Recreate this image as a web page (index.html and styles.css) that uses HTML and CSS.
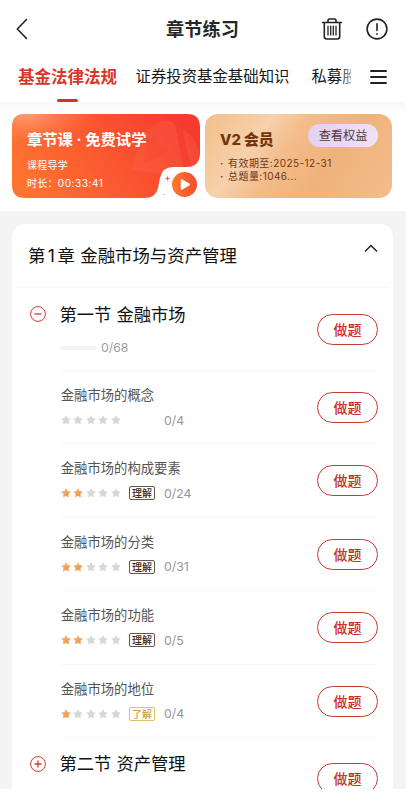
FILE: index.html
```html
<!DOCTYPE html>
<html lang="zh-CN">
<head>
<meta charset="utf-8">
<title>章节练习</title>
<link rel="stylesheet" href="styles.css">
</head>
<body>
<svg width="0" height="0" class="defs" aria-hidden="true">
  <defs>
    <linearGradient id="gold" x1="0" y1="0" x2="1" y2="1"><stop offset="0" stop-color="#f8bd7c"/><stop offset="1" stop-color="#e8883a"/></linearGradient>
    <symbol id="star" viewBox="0 0 10 10"><path d="M5 .6 6.4 3.3 9.4 3.8 7.3 6 7.7 9.1 5 7.8 2.3 9.1 2.7 6 .6 3.8 3.6 3.3Z" stroke-linejoin="round" stroke-width=".4"/></symbol>
  </defs>
</svg>
<div class="app">
  <header class="header">
    <svg class="back" width="14" height="22" viewBox="0 0 14 22"><path d="M11.500 1.500 2.300 11 11.500 20.500"/></svg>
    <h1>章节练习</h1>
    <div class="actions">
      <svg width="22" height="24" viewBox="0 0 22 24"><path d="M1.600 5.500H20.400M7 5.300V3.500Q7 2 8.500 2H13.500Q15 2 15 3.500V5.300M3.300 6V19.500Q3.300 22 5.800 22H16.200Q18.700 22 18.700 19.500V6"/><path stroke-width="1.300" d="M7 9.200V18M9.700 9.200V18M12.300 9.200V18M15 9.200V18"/></svg>
      <svg width="22" height="24" viewBox="0 0 22 24"><circle cx="11" cy="12" r="9.900"/><path d="M11 6.800V13.500M11 16.700V17.200"/></svg>
    </div>
  </header>
  <nav class="tabs">
    <span class="tab active">基金法律法规</span>
    <span class="tab second">证券投资基金基础知识</span>
    <span class="tab third">私募股权</span>
    <div class="more"><i></i><i></i><i></i></div>
  </nav>
  <section class="promos">
    <article class="promo course">
      <svg class="art" width="188" height="84" viewBox="0 0 188 84">
        <defs>
          <linearGradient id="red" x1="0" y1=".65" x2="1" y2=".35"><stop offset="0" stop-color="#ff7430"/><stop offset=".5" stop-color="#fb5730"/><stop offset="1" stop-color="#f43b2d"/></linearGradient>
          <radialGradient id="shine" cx=".08" cy="0" r=".38"><stop offset="0" stop-color="#ffb18a" stop-opacity=".75"/><stop offset="1" stop-color="#ff8050" stop-opacity="0"/></radialGradient>
          <linearGradient id="play" x1="0" x2="1"><stop offset="0" stop-color="#ff7933"/><stop offset="1" stop-color="#f54a2b"/></linearGradient>
        </defs>
        <path fill="url(#red)" d="M13 0H175Q188 0 188 13V39Q188 53 174 53H161Q150 53 148 64L146 74Q144 84 132 84H13Q0 84 0 71V13Q0 0 13 0Z"/>
        <path fill="url(#shine)" d="M13 0H175Q188 0 188 13V39Q188 53 174 53H161Q150 53 148 64L146 74Q144 84 132 84H13Q0 84 0 71V13Q0 0 13 0Z"/>
        <path fill="#ff7660" opacity=".2" d="M120 56Q128 14 150 7Q162 5 164 14L171 53H161Q150 53 148 60ZM171 16Q184 22 187 39Q187 50 180 52Q173 35 171 16Z"/>
        <path fill="#f44a2d" opacity=".4" d="M135 25Q133 23 138 24L155 34Q158 36 155 38L136 48Q132 50 132 46Z"/>
        <circle cx="172.500" cy="70.500" r="12.500" fill="url(#play)"/>
        <path fill="#fff" stroke="#fff" stroke-width="1.500" stroke-linejoin="round" d="M169.500 66V75L177.300 70.500Z"/>
        <path stroke="#e85c62" stroke-width="1.200" d="M153.500 64.500H157.500M155.500 62.500V66.500"/><path stroke="#ffb7a0" d="M151 80.500H153"/>
      </svg>
      <div class="copy">
        <h2>章节课 · 免费试学</h2>
        <p>课程导学</p>
        <p>时长：<span class="time">00:33:41</span></p>
      </div>
    </article>
    <article class="promo member">
      <div class="member-top"><h2>V2 会员</h2><span class="benefits">查看权益</span></div>
      <p><b>·</b>有效期至:2025-12-31</p>
      <p><b>·</b>总题量:1046...</p>
    </article>
  </section>
  <main class="content">
    <section class="chapter">
      <div class="chapter-head"><h2>第<span class="num">1</span>章 金融市场与资产管理</h2><svg width="14" height="9" viewBox="0 0 14 9"><path d="M1 7.500 7 1.500 13 7.500"/></svg></div>
      <div class="section-row">
        <svg class="toggle" width="16" height="16" viewBox="0 0 16 16"><circle cx="8" cy="8" r="7.400"/><path d="M4.500 8H11.500"/></svg>
        <div><h3>第一节 金融市场</h3><div class="progress"><i></i><span>0/68</span></div></div>
        <span class="practice">做题</span>
      </div>
      <div class="lesson"><div><h4>金融市场的概念</h4><div class="meta"><div class="stars"><svg><use href="#star"/></svg><svg><use href="#star"/></svg><svg><use href="#star"/></svg><svg><use href="#star"/></svg><svg><use href="#star"/></svg></div><span class="slot"></span><span>0/4</span></div></div><span class="practice">做题</span></div>
      <div class="lesson"><div><h4>金融市场的构成要素</h4><div class="meta"><div class="stars"><svg class="on"><use href="#star"/></svg><svg class="on"><use href="#star"/></svg><svg><use href="#star"/></svg><svg><use href="#star"/></svg><svg><use href="#star"/></svg></div><span class="slot tag">理解</span><span>0/24</span></div></div><span class="practice">做题</span></div>
      <div class="lesson"><div><h4>金融市场的分类</h4><div class="meta"><div class="stars"><svg class="on"><use href="#star"/></svg><svg class="on"><use href="#star"/></svg><svg><use href="#star"/></svg><svg><use href="#star"/></svg><svg><use href="#star"/></svg></div><span class="slot tag">理解</span><span>0/31</span></div></div><span class="practice">做题</span></div>
      <div class="lesson"><div><h4>金融市场的功能</h4><div class="meta"><div class="stars"><svg class="on"><use href="#star"/></svg><svg class="on"><use href="#star"/></svg><svg><use href="#star"/></svg><svg><use href="#star"/></svg><svg><use href="#star"/></svg></div><span class="slot tag">理解</span><span>0/5</span></div></div><span class="practice">做题</span></div>
      <div class="lesson"><div><h4>金融市场的地位</h4><div class="meta"><div class="stars"><svg class="on"><use href="#star"/></svg><svg><use href="#star"/></svg><svg><use href="#star"/></svg><svg><use href="#star"/></svg><svg><use href="#star"/></svg></div><span class="slot tag know">了解</span><span>0/4</span></div></div><span class="practice">做题</span></div>
      <div class="section-row next">
        <svg class="toggle" width="16" height="16" viewBox="0 0 16 16"><circle cx="8" cy="8" r="7.400"/><path d="M4.500 8H11.500M8 4.500V11.500"/></svg>
        <div><h3>第二节 资产管理</h3></div>
        <span class="practice">做题</span>
      </div>
    </section>
  </main>
</div>
</body>
</html>
```
FILE: styles.css
```css
* { box-sizing: border-box; margin: 0; padding: 0; }
body { background: #fff; color: #111; font-family: Inter, "Noto Sans CJK SC", sans-serif; overflow: hidden; }
svg { display: block; flex: none; fill: none; }
.defs { position: absolute; }
.app { width: 406px; height: 789px; overflow: hidden; display: flex; flex-direction: column; }
.header { height: 58px; flex: none; display: grid; grid-template-columns: 80px 1fr 80px; align-items: center; padding: 0 18px 0 15px; }
.header svg { stroke: #222; stroke-width: 1.6; stroke-linecap: round; stroke-linejoin: round; }
.header h1 { font-size: 18.2px; line-height: 26px; font-weight: 700; color: #262626; text-align: center; font-family: "Noto Sans CJK SC", sans-serif; padding: 0 0 3px 2px; }
.actions { display: flex; justify-content: flex-end; gap: 23px; }
.tabs { height: 44px; flex: none; display: flex; position: relative; padding-left: 18px; white-space: nowrap; line-height: 38px; overflow: hidden; }
.tab { font-size: 15.4px; color: #171717; flex: none; }
.tab.active { font-size: 16.5px; font-weight: 700; color: #d93528; position: relative; width: 99px; }
.tab.active::after { content: ""; position: absolute; left: 39px; bottom: 0; width: 21px; height: 3px; border-radius: 2px; background: #d93025; }
.second { margin-left: 18.5px; }
.third { margin-left: 22px; }
.more { position: absolute; right: 0; top: 0; bottom: 0; width: 55px; background: #fff; box-shadow: -4px 0 9px 1px #ffffffb0; display: flex; flex-direction: column; gap: 4px; padding: 12px 0 0 19px; }
.more i { width: 17px; height: 2px; background: #222; border-radius: 1px; }
.promos { height: 109px; flex: none; display: grid; grid-template-columns: 188px 187px; gap: 5px; padding: 12px 0 13px 12px; background: linear-gradient(#f8f8f8, #fff 12px); }
.promo { height: 84px; position: relative; }
.art { position: absolute; left: 0; top: 0; }
.copy { position: relative; padding: 15px 0 0 15px; color: #fff; }
.copy h2 { font-size: 15.3px; line-height: 22px; white-space: nowrap; letter-spacing: 0; }
.copy p { font-size: 10px; line-height: 18px; letter-spacing: .25px; }
.copy h2 + p { margin-top: 5px; }
.time { letter-spacing: .58px; }
.member { border-radius: 13px; padding: 10px 14px 0 15px; color: #6d371a; background: linear-gradient(125deg, #f2bf8a 0, #f6d1ac 28%, #f3bc8a 43%, #f0b27b 65%, #f3bd8d 100%); }
.member-top { display: flex; justify-content: space-between; height: 31px; }
.member h2 { font-size: 14.8px; line-height: 22px; font-weight: 800; padding-top: 5px; color: #74350f; }
.benefits { width: 70px; height: 23px; border-radius: 12px; background: linear-gradient(100deg, #e2d0f2, #eee3f5); font-size: 12.2px; line-height: 23px; text-align: center; color: #563638; }
.member p { font-size: 10px; line-height: 13px; letter-spacing: .45px; white-space: nowrap; display: flex; }
.member-top + p { margin-top: 2px; }
.member b { width: 8px; }
.content { flex: 1; background: #f4f4f4; padding: 13px 13px 0 12px; }
.chapter { background: #fff; border-radius: 13px 13px 0 0; height: 565px; }
.chapter-head { height: 64px; border-bottom: 1px solid #f8f8f8; margin: 0 4px; padding: 0 11px 0 12px; display: flex; justify-content: space-between; }
.chapter-head h2 { font-size: 17.4px; line-height: 63px; font-weight: 400; word-spacing: .6px; }
.num { display: inline-block; width: 12px; text-align: center; }
.chapter-head svg { margin-top: 20px; stroke: #222; stroke-width: 1.5; }
.section-row { height: 83px; display: grid; grid-template-columns: 16px 1fr 61px; column-gap: 13px; margin-left: 18px; padding-right: 15px; position: relative; }
.section-row::after { content: ""; position: absolute; left: 30px; right: 15px; bottom: 0; height: 1px; background: #f7f7f7; }
.toggle { margin-top: 18px; stroke: #d23a30; stroke-width: 1; }
.toggle path { stroke-width: 1.3; }
h3 { font-size: 17.3px; line-height: 26px; font-weight: 400; margin: 13.5px 0 -.5px .5px; word-spacing: .3px; }
.progress { display: flex; align-items: center; gap: 5px; font-size: 12.3px; line-height: 16px; color: #9b9b9b; margin-top: 13px; }
.progress i { width: 36px; height: 4px; border-radius: 2px; background: #f4f4f4; margin-left: 1px; }
.practice { width: 61px; height: 31px; border: 1.3px solid #c63a2e; border-radius: 16px; color: #c83025; text-align: center; font-size: 14px; line-height: 29px; font-weight: 500; }
.section-row .practice { margin-top: 26px; }
.lesson { height: 73.4px; margin: 0 15px 0 48px; display: flex; justify-content: space-between; border-bottom: 1px solid #f7f7f7; }
.lesson .practice { margin-top: 21px; }
h4 { font-size: 13.35px; line-height: 20px; font-weight: 400; color: #555; margin: 14px 0 0 .7px; }
.meta { height: 16px; margin-top: 7px; display: flex; align-items: center; color: #969696; font-size: 12.3px; }
.stars { display: flex; gap: 2.5px; width: 69px; padding-left: .5px; }
.stars svg { width: 10px; height: 10px; fill: #d7d7d7; stroke: #d7d7d7; }
.stars .on { fill: url(#gold); stroke: #f0a35d; }
.slot { width: 26px; margin-right: 9px; }
.tag { height: 14px; border: 1px solid #66554f; border-radius: 2px; color: #3d2922; font-size: 10px; line-height: 12px; font-weight: 500; text-align: center; }
.know { color: #cba43b; border-color: #dcc06b; }
.next .practice { margin-top: 25px; }
```
